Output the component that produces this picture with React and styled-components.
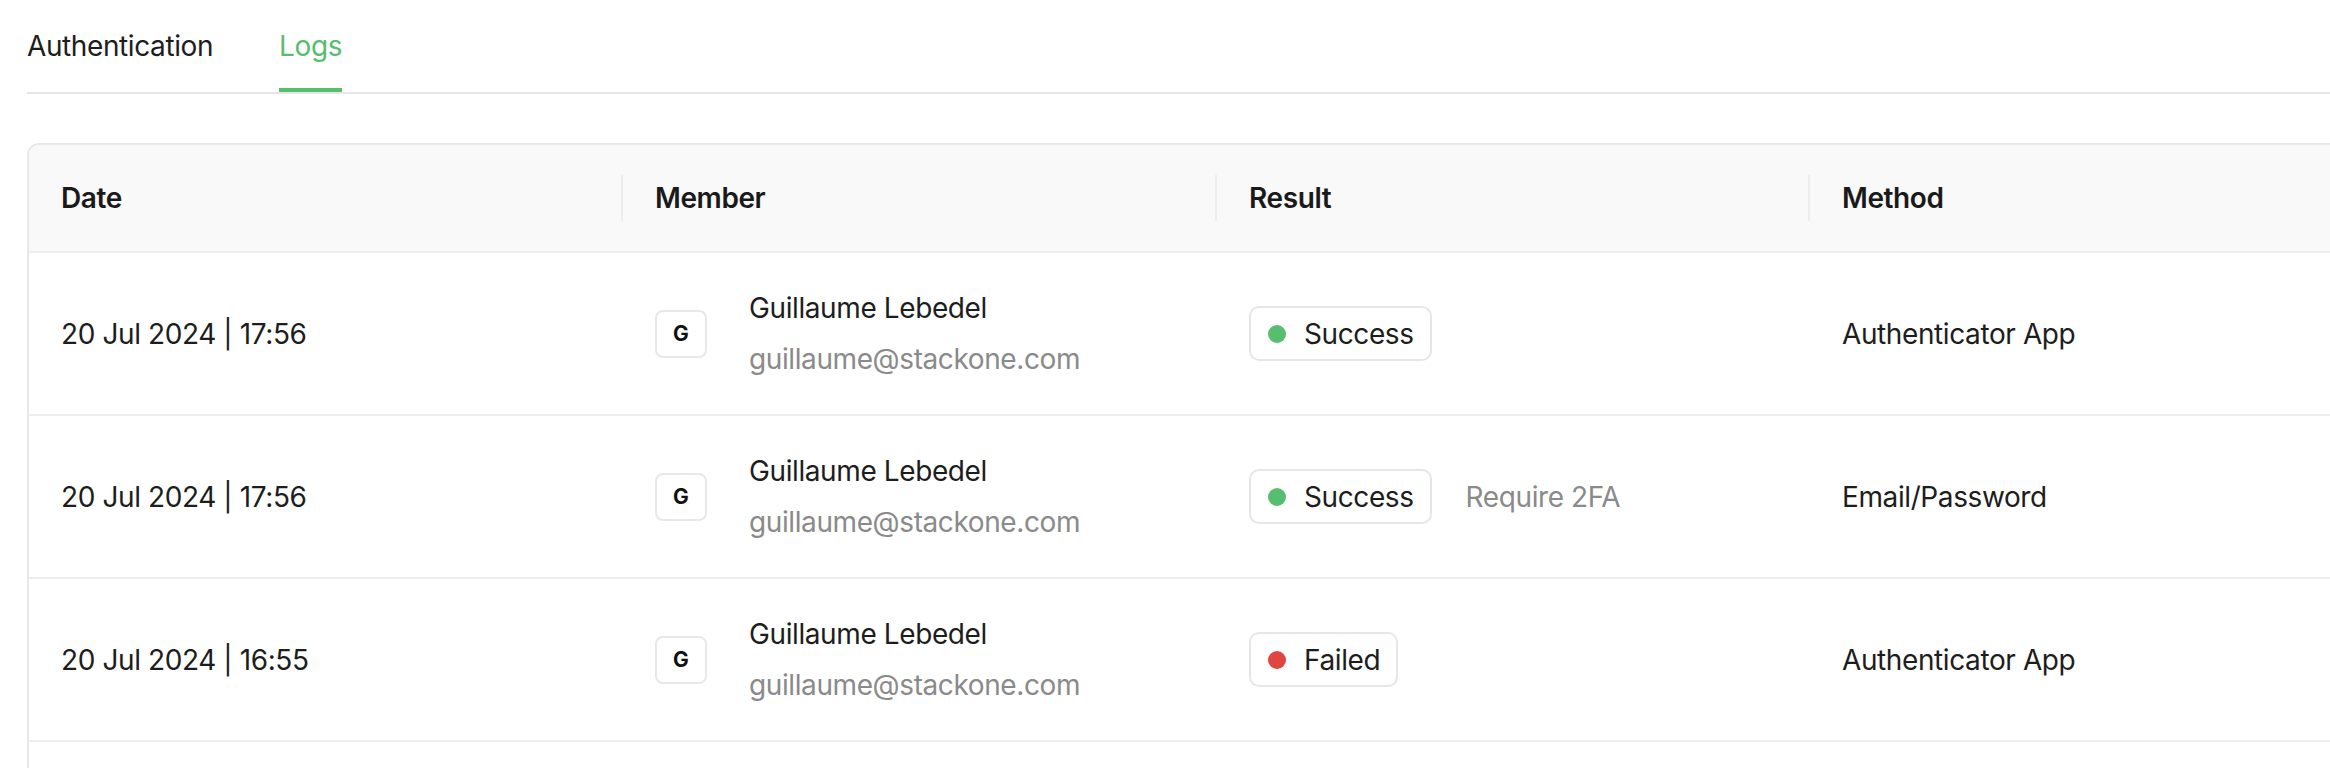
import React from 'react'
import styled, { createGlobalStyle } from 'styled-components'

const GlobalStyle = createGlobalStyle`
  html, body {
    margin: 0;
    padding: 0;
    background: #ffffff;
    overflow: hidden;
  }
  body {
    font-family: Inter, "Noto Sans", "Liberation Sans", sans-serif;
    color: #1d1d1d;
    letter-spacing: -0.4px;
    -webkit-font-smoothing: antialiased;
  }
`

const Page = styled.div`
  width: 2420px;
  padding: 26px 0 0 27px;
`

const Tabs = styled.div`
  display: flex;
  gap: 66px;
  border-bottom: 2px solid #e6e6e6;
`

const Tab = styled.div`
  font-size: 28px;
  line-height: 40px;
  padding-bottom: 22px;
  border-bottom: 4px solid ${p => (p.active ? '#57bd6f' : 'transparent')};
  color: ${p => (p.active ? '#57bd6f' : '#1d1d1d')};
  cursor: pointer;
`

const Card = styled.div`
  margin-top: 49px;
  padding-bottom: 60px;
  border: 2px solid #e8e8e8;
  border-radius: 12px;
  overflow: hidden;
`

const Row = styled.div`
  display: grid;
  grid-template-columns: 592px 594px 593px 1fr;
  height: ${p => (p.head ? '106px' : '161px')};
  background: ${p => (p.head ? '#f9f9f9' : '#ffffff')};
  border-bottom: 2px solid #eeeeee;
`

const HeadCell = styled.div`
  position: relative;
  display: flex;
  align-items: center;
  padding-left: ${p => (p.first ? '32px' : '34px')};
  font-size: 28px;
  font-weight: 600;
  color: #1a1a1a;

  &::before {
    content: '';
    display: ${p => (p.first ? 'none' : 'block')};
    position: absolute;
    left: 0;
    top: 30px;
    width: 2px;
    height: 46px;
    background: #ededed;
  }
`

const Cell = styled.div`
  display: flex;
  align-items: center;
  padding-left: ${p => (p.first ? '32px' : '34px')};
  font-size: 28px;
  line-height: 40px;
`

const Avatar = styled.div`
  width: 48px;
  height: 44px;
  border: 2px solid #e8e8e8;
  border-radius: 8px;
  display: flex;
  align-items: center;
  justify-content: center;
  font-size: 21px;
  font-weight: 700;
  letter-spacing: 0;
  color: #111;
  flex-shrink: 0;
`

const Member = styled.div`
  display: flex;
  flex-direction: column;
  gap: 11px;
  margin-left: 42px;
`

const Name = styled.div`
  font-size: 28px;
  line-height: 40px;
  color: #1d1d1d;
`

const Email = styled.div`
  font-size: 28px;
  line-height: 40px;
  color: #8a8a8a;
`

const Badge = styled.div`
  display: inline-flex;
  align-items: center;
  gap: 18px;
  height: 51px;
  padding: 0 16px 0 17px;
  border: 2px solid #e6e6e6;
  border-radius: 10px;
  font-size: 28px;
`

const Dot = styled.span`
  width: 18px;
  height: 18px;
  border-radius: 50%;
  background: ${p => (p.ok ? '#57bd6f' : '#e0463f')};
`

const Note = styled.span`
  margin-left: 34px;
  color: #8a8a8a;
`

const logs = [
  { date: '20 Jul 2024 | 17:56', ok: true, method: 'Authenticator App' },
  { date: '20 Jul 2024 | 17:56', ok: true, note: 'Require 2FA', method: 'Email/Password' },
  { date: '20 Jul 2024 | 16:55', ok: false, method: 'Authenticator App' },
]

const App = () => {
  return (
    <Page>
      <GlobalStyle />
      <Tabs>
        <Tab>Authentication</Tab>
        <Tab active>Logs</Tab>
      </Tabs>

      <Card>
        <Row head>
          <HeadCell first>Date</HeadCell>
          <HeadCell>Member</HeadCell>
          <HeadCell>Result</HeadCell>
          <HeadCell>Method</HeadCell>
        </Row>
        {logs.map((log, i) => (
          <Row key={i}>
            <Cell first>{log.date}</Cell>
            <Cell>
              <Avatar>G</Avatar>
              <Member>
                <Name>Guillaume Lebedel</Name>
                <Email>guillaume@stackone.com</Email>
              </Member>
            </Cell>
            <Cell>
              <Badge>
                <Dot ok={log.ok} />
                {log.ok ? 'Success' : 'Failed'}
              </Badge>
              {log.note && <Note>{log.note}</Note>}
            </Cell>
            <Cell>{log.method}</Cell>
          </Row>
        ))}
      </Card>
    </Page>
  )
}

export default App
